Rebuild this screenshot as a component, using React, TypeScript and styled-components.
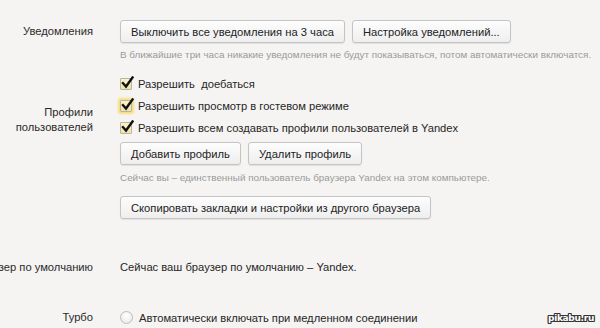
import React from "react";
import styled, { createGlobalStyle } from "styled-components";

const Global = createGlobalStyle`
  html, body { margin: 0; padding: 0; background: #f5f4f2; overflow: hidden; }
  body { font-family: "Liberation Sans", Arial, sans-serif; color: #262626; }
`;

const Page = styled.div`
  width: 600px;
  height: 328px;
  position: relative;
  overflow: hidden;
  background: #f5f4f2;
`;

const Section = styled.section<{ $top: number }>`
  display: grid;
  grid-template-columns: 93px 1fr;
  column-gap: 27px;
  margin-top: ${(p) => p.$top}px;
`;

const Label = styled.div<{ $pad?: number; $lh?: number }>`
  display: flex;
  justify-content: flex-end;
  text-align: right;
  font-size: 11.2px;
  line-height: ${(p) => p.$lh ?? 15}px;
  padding-top: ${(p) => p.$pad ?? 0}px;
  white-space: nowrap;
  color: #2a2a2a;
`;

const LabelText = styled.span`
  white-space: pre-line;
`;

const Content = styled.div`
  display: flex;
  flex-direction: column;
  align-items: flex-start;
`;

const ButtonRow = styled.div<{ $mt?: number }>`
  display: flex;
  gap: 7px;
  margin-top: ${(p) => p.$mt ?? 0}px;
`;

const Button = styled.button<{ $mt?: number }>`
  height: 23px;
  padding: 0 10px;
  margin-top: ${(p) => p.$mt ?? 0}px;
  font-family: "Liberation Sans", Arial, sans-serif;
  font-size: 11.2px;
  color: #222;
  border: 1px solid #c4c4c4;
  border-radius: 3px;
  background: linear-gradient(#fdfdfd, #eeeeee);
  box-shadow: 0 1px 1px rgba(0, 0, 0, 0.08);
  white-space: nowrap;
`;

const Hint = styled.div<{ $mt: number }>`
  margin-top: ${(p) => p.$mt}px;
  font-size: 9.9px;
  line-height: 12px;
  color: #9a9a9a;
  white-space: nowrap;
`;

const CheckRow = styled.label`
  display: flex;
  align-items: center;
  gap: 6px;
  height: 22px;
  font-size: 11.2px;
  color: #262626;
  white-space: pre;
`;

const Box = styled.span<{ $focus?: boolean }>`
  position: relative;
  width: 10px;
  height: 10px;
  border: 1px solid #b9b49a;
  border-radius: 1px;
  background: linear-gradient(#fbf3cf, #efe3a8);
  box-shadow: ${(p) => (p.$focus ? "0 0 2px 2px rgba(250, 215, 90, 0.75)" : "none")};
  flex: none;
`;

const Tick = styled.svg`
  position: absolute;
  left: 0px;
  top: -3px;
  width: 13px;
  height: 13px;
`;

const Text = styled.div`
  font-size: 11.2px;
  line-height: 15px;
  color: #262626;
  white-space: nowrap;
`;

const RadioRow = styled.div`
  display: flex;
  align-items: center;
  gap: 6px;
  height: 15px;
  font-size: 11.2px;
  color: #262626;
  white-space: nowrap;
`;

const Radio = styled.span`
  width: 11px;
  height: 11px;
  border-radius: 50%;
  border: 1px solid #bdbdbd;
  background: radial-gradient(circle at 50% 35%, #ffffff, #e6e6e6);
  flex: none;
`;

const Watermark = styled.div`
  position: absolute;
  right: 6px;
  bottom: 5px;
  font-family: "DejaVu Sans", sans-serif;
  font-weight: bold;
  font-size: 9px;
  letter-spacing: -0.3px;
  color: #fff;
  text-shadow: -1px 0 #333, 1px 0 #333, 0 -1px #333, 0 1px #333, -1px -1px #333,
    1px 1px #333, -1px 1px #333, 1px -1px #333;
`;

const Check = ({ children, focus }: { children: React.ReactNode; focus?: boolean }) => (
  <CheckRow>
    <Box $focus={focus}>
      <Tick viewBox="0 0 13 13">
        <path d="M2 7.2 L5 10.5 L11.5 1.5" fill="none" stroke="#111" strokeWidth="2.4" strokeLinecap="square" strokeLinejoin="miter" />
      </Tick>
    </Box>
    {children}
  </CheckRow>
);

export default function App() {
  return (
    <Page>
      <Global />
      <Section $top={20}>
        <Label $lh={23}>Уведомления</Label>
        <Content>
          <ButtonRow>
            <Button>Выключить все уведомления на 3 часа</Button>
            <Button>Настройка уведомлений...</Button>
          </ButtonRow>
          <Hint $mt={6}>
            В ближайшие три часа никакие уведомления не будут показываться, потом автоматически включатся.
          </Hint>
        </Content>
      </Section>
      <Section $top={12}>
        <Label $pad={32}>
          <LabelText>{"Профили\nпользователей"}</LabelText>
        </Label>
        <Content>
          <Check>{"Разрешить  доебаться"}</Check>
          <Check focus>Разрешить просмотр в гостевом режиме</Check>
          <Check>Разрешить всем создавать профили пользователей в Yandex</Check>
          <ButtonRow $mt={3}>
            <Button>Добавить профиль</Button>
            <Button>Удалить профиль</Button>
          </ButtonRow>
          <Hint $mt={7}>Сейчас вы – единственный пользователь браузера Yandex на этом компьютере.</Hint>
          <Button $mt={12}>Скопировать закладки и настройки из другого браузера</Button>
        </Content>
      </Section>
      <Section $top={41}>
        <Label>Браузер по умолчанию</Label>
        <Content>
          <Text>Сейчас ваш браузер по умолчанию – Yandex.</Text>
        </Content>
      </Section>
      <Section $top={35}>
        <Label>Турбо</Label>
        <Content>
          <RadioRow>
            <Radio />
            Автоматически включать при медленном соединении
          </RadioRow>
        </Content>
      </Section>
      <Watermark>pikabu.ru</Watermark>
    </Page>
  );
}
